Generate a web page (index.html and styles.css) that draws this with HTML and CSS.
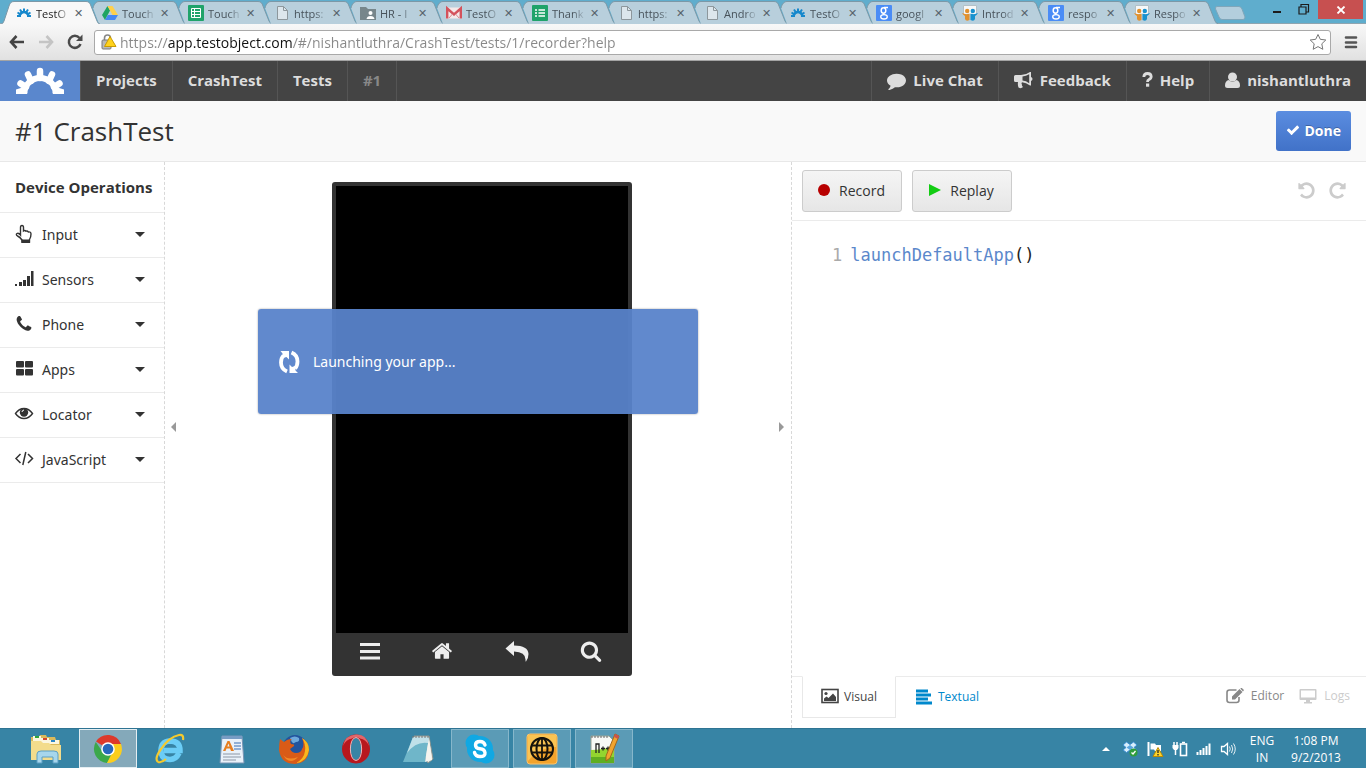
FILE: index.html
```html
<!DOCTYPE html>
<html lang="en">
<head>
    <meta charset="UTF-8">
    <meta name="viewport" content="width=device-width, initial-scale=1.0">
    <title>TestObject - CrashTest</title>
    <link rel="stylesheet" href="styles.css">
</head>
<body>
    <!-- shared icons -->
    <svg class="defs" aria-hidden="true">
        <symbol id="tab-shape" viewBox="0 0 100 24">
            <path class="tab-fill" d="M13 24L7 8C8 4 10 1.500 13 1.500H86C89 1.500 90 3 91 6L97 21Q98 24 100 24Z"/>
            <path class="tab-line" d="M7 8C8 4 10 1.500 13 1.500H86C89 1.500 90 3 91 6L97 21Q98 23.500 100 23.500"/>
        </symbol>
        <symbol id="tab-first" viewBox="0 0 100 24">
            <path class="tab-fill" d="M1 24Q3 24 4 21L9 6C10 3 11 1.500 14 1.500H86C89 1.500 90 3 91 6L97 21Q98 24 100 24Z"/>
            <path class="tab-line" d="M1 24Q3 24 4 21L9 6C10 3 11 1.500 14 1.500H86C89 1.500 90 3 91 6L97 21Q98 24 100 24"/>
        </symbol>
        <symbol id="fav-gear" viewBox="0 0 16 16">
            <path d="M3.500 10.500Q5 7 8 7T12.500 10.500" fill="none" stroke="#1688cc" stroke-width="2.500"/>
            <path d="M1 11H5M11 11H15M1.500 7.500L4 9M4 4.500L6 7.500M8 3.500V7M12 4.500L10 7.500M14.500 7.500L12 9" fill="none" stroke="#1688cc" stroke-width="2"/>
        </symbol>
        <symbol id="fav-drive" viewBox="0 0 16 16">
            <path d="M5.500 1L0 10L3 15L8 5.500Z" fill="#1fa463"/>
            <path d="M5.500 1H10.500L16 10H10.500Z" fill="#ffd04b"/>
            <path d="M3 15L5.800 10H16L13 15Z" fill="#4688f1"/>
        </symbol>
        <symbol id="fav-sheet" viewBox="0 0 16 16">
            <rect width="16" height="16" rx="1" fill="#1fa36a"/>
            <path d="M3.500 3.500H12.500V12.500H3.500ZM3.500 6.500H12.500M3.500 9.500H12.500M6.500 3.500V12.500" fill="none" stroke="#fff"/>
        </symbol>
        <symbol id="fav-form" viewBox="0 0 16 16">
            <rect width="16" height="16" rx="1" fill="#1fa36a"/>
            <path d="M3 5H5M3 8H5M3 11H5M6.500 5H13M6.500 8H13M6.500 11H13" stroke="#fff" stroke-width="1.500"/>
        </symbol>
        <symbol id="fav-page" viewBox="0 0 16 16">
            <path d="M3.500 1.500H9.500L13.500 5.500V14.500H3.500Z" fill="#dce6ec" stroke="#8d979c"/>
            <path d="M9.500 1.500V5.500H13.500" fill="none" stroke="#8d979c"/>
        </symbol>
        <symbol id="fav-folder" viewBox="0 0 16 16">
            <path d="M0 2H6L8 4H16V15H0Z" fill="#77868b"/>
            <circle cx="10.500" cy="8" r="2" fill="#fff"/>
            <path d="M6.500 14Q7 11 10.500 11T14.500 14Z" fill="#fff"/>
        </symbol>
        <symbol id="fav-mail" viewBox="0 0 16 16">
            <rect y="2.500" width="16" height="11" fill="#f4e9e9"/>
            <path d="M1.200 13.500V3.500L8 9.500L14.800 3.500V13.500" fill="none" stroke="#d4525c" stroke-width="2.400"/>
            <path d="M3 13L6.500 9M13 13L9.500 9" stroke="#d98a90"/>
        </symbol>
        <symbol id="fav-google" viewBox="0 0 16 16">
            <rect width="16" height="16" rx="1" fill="#4a8cf6"/>
            <ellipse cx="7.500" cy="5.500" rx="2.300" ry="2.700" fill="none" stroke="#fff" stroke-width="1.500"/>
            <ellipse cx="8" cy="11.800" rx="3.300" ry="2.200" fill="none" stroke="#fff" stroke-width="1.300"/>
            <path d="M8 2.500H12M8 8L7 9.500" stroke="#fff" stroke-width="1.300"/>
        </symbol>
        <symbol id="fav-slide" viewBox="0 0 16 16">
            <path d="M1.500 9V.5H14.500V9" fill="#f6f8f9" stroke="#b3c0c6"/>
            <circle cx="5.200" cy="6" r="2.200" fill="#e2912e"/>
            <circle cx="10.800" cy="6" r="2.200" fill="#1792cf"/>
            <path d="M0 8Q4 10 7.500 8.500V15Q4 17 3 14V11Q1 10 0 8Z" fill="#e2912e"/>
            <path d="M16 8Q12 10 8.500 8.500V15Q12 17 13 14V11Q15 10 16 8Z" fill="#1792cf"/>
        </symbol>
        <symbol id="repeat" viewBox="0 0 1792 1792">
            <path d="M1664 256v448q0 26-19 45t-45 19h-448q-42 0-59-40-17-39 14-69l138-138q-148-137-349-137-104 0-198.500 40.500t-163.500 109.500-109.500 163.500-40.500 198.500 40.500 198.500 109.500 163.500 163.500 109.500 198.500 40.500q119 0 225-52t179-147q7-10 23-12 15 0 25 9l137 138q9 8 9.500 20.500t-7.500 22.500q-109 132-264 204.500t-327 72.500q-156 0-298-61t-245-164-164-245-61-298 61-298 164-245 245-164 298-61q147 0 284.500 55.500t244.500 156.500l130-129q29-31 70-14 39 17 39 59z"/>
        </symbol>
    </svg>

    <header class="browser">
        <div class="tab-strip">
            <div class="tabs">
                <div class="tab active"><svg class="tab-bg"><use href="#tab-first"/></svg><svg class="fav"><use href="#fav-gear"/></svg><span>TestO</span><button aria-label="Close tab">✕</button></div>
                <div class="tab"><svg class="tab-bg"><use href="#tab-shape"/></svg><svg class="fav"><use href="#fav-drive"/></svg><span>Touch</span><button aria-label="Close tab">✕</button></div>
                <div class="tab"><svg class="tab-bg"><use href="#tab-shape"/></svg><svg class="fav"><use href="#fav-sheet"/></svg><span>Touch</span><button aria-label="Close tab">✕</button></div>
                <div class="tab"><svg class="tab-bg"><use href="#tab-shape"/></svg><svg class="fav"><use href="#fav-page"/></svg><span>https:</span><button aria-label="Close tab">✕</button></div>
                <div class="tab"><svg class="tab-bg"><use href="#tab-shape"/></svg><svg class="fav"><use href="#fav-folder"/></svg><span>HR - I</span><button aria-label="Close tab">✕</button></div>
                <div class="tab"><svg class="tab-bg"><use href="#tab-shape"/></svg><svg class="fav"><use href="#fav-mail"/></svg><span>TestO</span><button aria-label="Close tab">✕</button></div>
                <div class="tab"><svg class="tab-bg"><use href="#tab-shape"/></svg><svg class="fav"><use href="#fav-form"/></svg><span>Thank</span><button aria-label="Close tab">✕</button></div>
                <div class="tab"><svg class="tab-bg"><use href="#tab-shape"/></svg><svg class="fav"><use href="#fav-page"/></svg><span>https:</span><button aria-label="Close tab">✕</button></div>
                <div class="tab"><svg class="tab-bg"><use href="#tab-shape"/></svg><svg class="fav"><use href="#fav-page"/></svg><span>Andro</span><button aria-label="Close tab">✕</button></div>
                <div class="tab"><svg class="tab-bg"><use href="#tab-shape"/></svg><svg class="fav"><use href="#fav-gear"/></svg><span>TestO</span><button aria-label="Close tab">✕</button></div>
                <div class="tab"><svg class="tab-bg"><use href="#tab-shape"/></svg><svg class="fav"><use href="#fav-google"/></svg><span>googl</span><button aria-label="Close tab">✕</button></div>
                <div class="tab"><svg class="tab-bg"><use href="#tab-shape"/></svg><svg class="fav"><use href="#fav-slide"/></svg><span>Introd</span><button aria-label="Close tab">✕</button></div>
                <div class="tab"><svg class="tab-bg"><use href="#tab-shape"/></svg><svg class="fav"><use href="#fav-google"/></svg><span>respo</span><button aria-label="Close tab">✕</button></div>
                <div class="tab"><svg class="tab-bg"><use href="#tab-shape"/></svg><svg class="fav"><use href="#fav-slide"/></svg><span>Respo</span><button aria-label="Close tab">✕</button></div>
            </div>
            <button class="new-tab" aria-label="New tab">
                <svg width="32" height="16" viewBox="0 0 32 16"><path d="M3 1.500H25Q27 1.500 28 4L31 12Q31 14.500 29 14.500H8Q6 14.500 5 12L1.500 4Q1 1.500 3 1.500Z" fill="#b3cedd" stroke="#7fa6ba"/></svg>
            </button>
            <div class="window-buttons">
                <button aria-label="Minimize"><svg width="10" height="12" viewBox="0 0 10 12"><path d="M1 9H9" stroke="#1c1c1c" stroke-width="2"/></svg></button>
                <button aria-label="Restore"><svg width="12" height="12" viewBox="0 0 12 12"><path d="M1 4H8V11H1ZM3 3.500V1.500H10.500V9H8.500" fill="none" stroke="#1c1c1c" stroke-width="1.200"/></svg></button>
                <button class="close" aria-label="Close"><svg width="10" height="8" viewBox="0 0 10 8"><path d="M1.500 .5L8.500 7.500M8.500 .5L1.500 7.500" stroke="#fff" stroke-width="1.800"/></svg></button>
            </div>
        </div>
        <div class="toolbar">
            <button aria-label="Back"><svg width="16" height="14" viewBox="0 0 16 14"><path d="M7.500 1L2 7L7.500 13M2 7H15" fill="none" stroke="#444" stroke-width="2.600"/></svg></button>
            <button aria-label="Forward"><svg width="16" height="14" viewBox="0 0 16 14"><path d="M8.500 1L14 7L8.500 13M14 7H1" fill="none" stroke="#c4c4c4" stroke-width="2.600"/></svg></button>
            <button aria-label="Reload"><svg width="16" height="16" viewBox="0 0 16 16"><path d="M12.500 4A6 6 0 1 0 13.500 10" fill="none" stroke="#4a4a4a" stroke-width="2.500"/><path d="M15.500 .5V7H9Z" fill="#4a4a4a"/></svg></button>
            <div class="omnibox">
                <svg width="16" height="16" viewBox="0 0 16 16">
                    <path d="M3.500 7V4Q3.500 1 6.500 1T9.500 4" fill="none" stroke="#888" stroke-width="1.600"/>
                    <rect x="1" y="6" width="9" height="9" rx="1" fill="#b9b9b9" stroke="#7b7b7b"/>
                    <path d="M9 2.500L15 12.500H3.500Z" fill="#ffd21c" stroke="#c99b00" stroke-linejoin="round"/>
                </svg>
                <input class="url" type="text" aria-label="Address" value="https://app.testobject.com/#/nishantluthra/CrashTest/tests/1/recorder?help">
                <button aria-label="Bookmark"><svg width="18" height="18" viewBox="0 0 18 18"><path d="M9 1.500L11.300 6.300L16.800 7L12.800 10.800L13.800 16.300L9 13.600L4.200 16.300L5.200 10.800L1.200 7L6.700 6.300Z" fill="#fff" stroke="#777" stroke-linejoin="round"/></svg></button>
            </div>
            <button aria-label="Menu"><svg width="14" height="14" viewBox="0 0 14 14"><path d="M2 2.500H12M2 7.500H12M2 12H12" stroke="#555" stroke-width="2.600" stroke-linecap="round"/></svg></button>
        </div>
    </header>

    <nav class="navbar">
        <a class="logo" href="#" aria-label="TestObject">
            <svg width="50" height="28" viewBox="0 0 50 28">
                <path d="M9.500 26A15.500 15 0 0 1 40.500 26" fill="none" stroke="#fff" stroke-width="6"/>
                <path d="M25 11V4M16 14L13 7.500M34 14L37 7.500M11 20L5.500 16.500M39 20L44.500 16.500" stroke="#fff" stroke-width="6.500" stroke-linecap="round"/>
                <path d="M1 27V22.500L9 20L12.500 27ZM49 27V22.500L41 20L37.500 27Z" fill="#fff"/>
            </svg>
        </a>
        <a href="#">Projects</a>
        <a href="#">CrashTest</a>
        <a href="#">Tests</a>
        <a class="current" href="#">#1</a>
        <div class="nav-right">
            <a href="#"><svg width="19" height="19" viewBox="0 0 1792 1792"><path d="M1792 896q0 174-120 321.500t-326 233-450 85.500q-70 0-145-8-198 175-460 242-49 14-114 22-17 2-30.500-9t-17.500-29v-1q-3-4-.5-12t2-10 4.500-9.500l6-9 7-8.500 8-9q7-8 31-34.500t34.500-38 31-39.500 32.500-51 27-59 26-76q-157-89-247.500-220t-90.500-281q0-130 71-248.500t191-204.500 286-136.500 348-50.500q244 0 450 85.500t326 233 120 321.500z"/></svg>Live Chat</a>
            <a href="#"><svg width="19" height="17" viewBox="0 0 19 17"><path d="M0 4.500Q0 3 1.500 3H7Q12 3 16 0H17V5Q18.500 5.500 18.500 7T17 9V13.500H16Q12 10.500 8 10.200Q7 11.500 8 12.500Q7.500 13.500 9 15Q7 17 4.500 15.500Q3.500 13 4 10H1.500Q0 10 0 8.500ZM8.500 4.500V8.600Q12 9 15.200 11.200V2.200Q12 4.200 8.500 4.500Z" fill-rule="evenodd"/></svg>Feedback</a>
            <a href="#"><svg width="11" height="16" viewBox="0 0 11 16"><path d="M1.800 5Q2 1.500 5.500 1.500T9.200 4.500Q9.200 6.500 7 7.500Q5.500 8.200 5.500 10" fill="none" stroke="#ddd" stroke-width="2.800"/><rect x="4" y="11.500" width="3.200" height="3.200"/></svg>Help</a>
            <a href="#"><svg width="15" height="17" viewBox="0 0 15 17"><circle cx="7.500" cy="5" r="4.500"/><path d="M3.500 8Q7.500 11.500 11.500 8Q15 9 15 13.500Q15 16 12.500 16H2.500Q0 16 0 13.500Q0 9 3.500 8Z"/></svg>nishantluthra</a>
        </div>
    </nav>

    <div class="page-title">
        <h1>#1 CrashTest</h1>
        <button class="done"><svg width="14" height="14" viewBox="0 0 1792 1792"><path d="M1671 566q0 40-28 68l-724 724-136 136q-28 28-68 28t-68-28l-136-136-362-362q-28-28-28-68t28-68l136-136q28-28 68-28t68 28l294 295 656-657q28-28 68-28t68 28l136 136q28 28 28 68z"/></svg>Done</button>
    </div>

    <main class="workspace">
        <aside class="sidebar">
            <h2>Device Operations</h2>
            <button><svg viewBox="0 0 20 20"><path d="M6.500 11V3.500Q6.500 1.500 8 1.500T9.500 3.500V7Q11 6 12 7.200Q13.500 6.700 14.300 8Q17 7.500 17 10Q17 13 15.500 15.500V18H8V16Q6 13 3.500 12Q1.500 10.500 3 9.500T6.500 11Z" fill="none" stroke="#333" stroke-width="1.400"/><path d="M7.500 15.500H16V19H7.500Z"/></svg>Input<i class="caret"></i></button>
            <button><svg viewBox="0 0 20 20"><path d="M1 15H3V17H1ZM5 13H8V17H5ZM9 11H12V17H9ZM13 7H16V17H13ZM17 2H19.500V17H17Z"/></svg>Sensors<i class="caret"></i></button>
            <button><svg viewBox="-60 -60 1912 1912"><path d="M1600 1240q0 27-10 70.500t-21 68.500q-21 50-122 106-94 51-186 51-27 0-53-3.500t-57.500-12.500-47-14.500-55.500-20.500-49-18q-98-35-175-83-127-79-264-216t-216-264q-48-77-83-175-3-9-18-49t-20.500-55.500-14.500-47-12.500-57.500-3.500-53q0-92 51-186 56-101 106-122 25-11 68.500-21t70.500-10q14 0 21 3 18 6 53 76 11 19 30 54t35 63.500 31 53.500q3 4 17.500 25t21.500 35.500 7 28.500q0 20-28.500 50t-62 55-62 53-28.500 46q0 9 5 22.500t8.500 20.500 14 24 11.500 19q76 137 174 235t235 174q2 1 19 11.500t24 14 20.500 8.500 22.500 5q18 0 46-28.500t53-62 55-62 50-28.500q14 0 28.500 7t35.500 21.500 25 17.500q25 15 53.500 31t63.500 35 54 30q70 35 76 53 3 7 3 21z"/></svg>Phone<i class="caret"></i></button>
            <button><svg viewBox="0 0 20 20"><rect x="2" y="2" width="8" height="6.500" rx="1"/><rect x="11" y="2" width="8" height="6.500" rx="1"/><rect x="2" y="10" width="8" height="6.500" rx="1"/><rect x="11" y="10" width="8" height="6.500" rx="1"/></svg>Apps<i class="caret"></i></button>
            <button><svg viewBox="0 0 20 20"><path d="M1.500 9.500Q5 4.500 10 4.500T18.500 9.500Q15 14.500 10 14.500T1.500 9.500Z" fill="none" stroke="#333" stroke-width="1.400"/><circle cx="10" cy="8.500" r="4.200"/><path d="M8 8Q8 6.300 10 6" fill="none" stroke="#fff"/></svg>Locator<i class="caret"></i></button>
            <button><svg viewBox="0 0 20 20"><path d="M6.500 5L2 9.500L6.500 14M14 5L18.500 9.500L14 14M11.800 3L8.800 16" fill="none" stroke="#333" stroke-width="1.500"/></svg>JavaScript<i class="caret"></i></button>
        </aside>

        <section class="stage">
            <button class="handle" aria-label="Collapse left"><i class="arrow-left"></i></button>
            <div class="phone">
                <div class="screen"></div>
                <div class="phone-keys">
                    <button aria-label="Menu"><svg width="20" height="20" viewBox="0 0 20 20"><path d="M0 4.500H20M0 11.500H20M0 18H20" stroke="#eee" stroke-width="3"/></svg></button>
                    <button aria-label="Home"><svg width="22" height="22" viewBox="0 0 1792 1792"><path d="M1472 992v480q0 26-19 45t-45 19h-384v-384h-256v384h-384q-26 0-45-19t-19-45v-480q0-1 .5-3t.5-3l575-474 575 474q1 2 1 6zm223-69l-62 74q-8 9-21 11h-3q-13 0-21-7l-692-577-692 577q-12 8-24 7-13-2-21-11l-62-74q-8-10-7-23.500t11-21.500l719-599q32-26 76-26t76 26l244 204v-195q0-14 9-23t23-9h192q14 0 23 9t9 23v408l219 182q10 8 11 21.500t-7 23.500z"/></svg></button>
                    <button aria-label="Back"><svg width="24" height="22" viewBox="0 0 24 22"><path d="M9 1V5.500Q23 5.500 23.500 14Q23.500 18 21 21.500Q20.500 21.500 20.500 21Q21.500 12 9 11.500V16L.5 8.500Z"/></svg></button>
                    <button aria-label="Search"><svg width="22" height="22" viewBox="0 0 1792 1792"><path d="M1216 832q0-185-131.500-316.500t-316.500-131.500-316.500 131.500-131.500 316.500 131.500 316.500 316.500 131.500 316.500-131.500 131.500-316.500zm512 832q0 52-38 90t-90 38q-54 0-90-38l-343-342q-179 124-399 124-143 0-273.500-55.500t-225-150-150-225-55.500-273.500 55.500-273.500 150-225 225-150 273.500-55.500 273.500 55.500 225 150 150 225 55.500 273.500q0 220-124 399l343 343q37 37 37 90z"/></svg></button>
                </div>
            </div>
            <button class="handle right" aria-label="Collapse right"><i class="arrow-right"></i></button>
            <div class="message" role="status">
                <svg width="24" height="24" viewBox="0 0 24 24">
                    <path d="M10 21.500Q4 19 4 12.500Q4 8 6.500 5.500M14.500 2.500Q20.500 5 20.500 11.500Q20.500 16 18 18.500" fill="none" stroke="#fff" stroke-width="3.800"/>
                    <path d="M3.500 1H12V9.500L9.500 7L6 8L5.500 3.500ZM21 23H12.500V14.500L15 17L18 16L18.500 20.500Z"/>
                </svg>
                <span>Launching your app...</span>
            </div>
        </section>

        <section class="editor">
            <div class="editor-bar">
                <button class="btn"><svg width="12" height="12" viewBox="0 0 12 12"><circle cx="6" cy="6" r="6" fill="#b80000"/></svg>Record</button>
                <button class="btn"><svg width="12" height="12" viewBox="0 0 12 12"><path d="M0 0L12 6L0 12Z" fill="#13cc13"/></svg>Replay</button>
                <div class="history">
                    <button aria-label="Undo"><svg class="flip" width="19" height="19"><use href="#repeat"/></svg></button>
                    <button aria-label="Redo"><svg width="19" height="19"><use href="#repeat"/></svg></button>
                </div>
            </div>
            <pre class="code"><span class="line-no">1</span><code><span class="fn">launchDefaultApp</span>()</code></pre>
            <div class="editor-tabs">
                <button class="view-tab selected"><svg width="18" height="16" viewBox="0 0 18 16"><rect x="1" y="1.500" width="16" height="13" fill="none" stroke="#444" stroke-width="1.600"/><circle cx="5" cy="5.500" r="1.600"/><path d="M3 13V10.500L5.500 8.500L7.500 10L12 5.500L15 9V13Z"/></svg>Visual</button>
                <button class="view-tab"><svg width="16" height="16" viewBox="0 0 16 16"><path d="M0 2H12M0 6H15M0 10H12M0 14H16" stroke="#0088cc" stroke-width="3"/></svg>Textual</button>
                <div class="tools">
                    <button><svg width="18" height="16" viewBox="0 0 18 16"><path d="M13 9V12Q13 14.500 10.500 14.500H3.500Q1 14.500 1 12V4.500Q1 2 3.500 2H10.500" fill="none" stroke="#888" stroke-width="1.600"/><path d="M6 11.500V8.500L13.500 1L16.500 4L9 11.500ZM14.300 .5L15.500 -.3L18 2L17 3.500Z"/></svg>Editor</button>
                    <button disabled><svg width="18" height="16" viewBox="0 0 18 16"><path d="M1.500 1H16.500Q17.500 1 17.500 2V11Q17.500 12 16.500 12H11V14H13V15.500H5V14H7V12H1.500Q.5 12 .5 11V2Q.5 1 1.500 1ZM2 2.500V9.500H16V2.500Z" fill-rule="evenodd"/></svg>Logs</button>
                </div>
            </div>
        </section>
    </main>

    <footer class="taskbar">
        <button aria-label="File Explorer"><svg width="34" height="34" viewBox="0 0 34 34">
            <path d="M2 5H10L11 3H17L18 5H26L27 8H31V28H2Z" fill="#d9b95b"/><path d="M4 4H12V9H4ZM12 6H20V11H12ZM20 8H30V12H20Z" fill="#fbf6df"/><path d="M6 4H10V6H6Z" fill="#2fa53a"/><path d="M14 6H18V8H14Z" fill="#d4452e"/><path d="M22 8H26V10H22Z" fill="#2a86c9"/><path d="M2 9H12L14 11H20L22 13H32V28H2Z" fill="#f3dc8c"/>
            <path d="M8 31V22Q8 19 12 19H25Q29 19 29 22V31H24V25H13V31Z" fill="#a7d6ec" stroke="#5a9fc4"/></svg></button>
        <button class="focused" aria-label="Chrome"><svg width="32" height="32" viewBox="0 0 32 32">
            <path d="M16 16L4 8.500A14 14 0 0 1 29 11H16Z" fill="#dd3a2c"/><path d="M16 16L22 19L15 30A14 14 0 0 1 3.800 9L10 18Z" fill="#3ba84a"/><path d="M16 11H29A14 14 0 0 1 15 30L21 18Z" fill="#fbce1d"/><circle cx="16" cy="16" r="6.800" fill="#fff"/><circle cx="16" cy="16" r="5.300" fill="#2769bd"/></svg></button>
        <button aria-label="Internet Explorer"><svg width="32" height="32" viewBox="0 0 32 32">
            <path d="M25 20Q22 26.500 16 26.500Q7 26.500 7 17.500T16 8Q26 8 26 17.500H10" fill="none" stroke="#6bcdf6" stroke-width="5.500"/><path d="M4 29Q0 26 7 16Q15 4 25 2Q30 1 29 7" fill="none" stroke="#f4ca2e" stroke-width="2.200"/><path d="M4 29Q8 30 12 26" fill="none" stroke="#f4ca2e" stroke-width="2"/></svg></button>
        <button aria-label="WordPad"><svg width="32" height="32" viewBox="0 0 32 32">
            <path d="M6 3H26L28 30H4Z" fill="#e9f1f9" stroke="#7995b4"/><path d="M6 3H26V6H6Z" fill="#779cc4"/><path d="M7 18L11.500 8H13.500L18 18H15L14 15.500H10.500L9.500 18ZM11.300 13.500H13.500L12.500 10.500Z" fill="#e77f21" fill-rule="evenodd"/><path d="M18 10H25M18 13H25M18 16H25" stroke="#3a6eb3"/><path d="M7 21H24M7 24H25M7 27H20" stroke="#8d97a5"/></svg></button>
        <button aria-label="Firefox"><svg width="32" height="32" viewBox="0 0 32 32">
            <circle cx="17" cy="14" r="12" fill="#22549d"/><path d="M12 5Q17 2 21 5Q22 9 18 9Q14 12 13 7Z" fill="#6da9dc"/><path d="M2 6L6 9Q9 6 14 6Q11 8 13 11Q17 11 16 13L12 16Q14 20 18 20Q23 20 24 16Q27 12 24 5Q31 9 31 17Q30 30 17 31Q3 31 1 17Q1 11 2 6Z" fill="#d95b17"/><path d="M24 5Q31 9 31 17Q29 29 18 30Q26 26 27 18Q28 11 24 5Z" fill="#f8b71e"/><path d="M5 22Q10 28 20 24Q14 31 8 26Z" fill="#f28a26"/></svg></button>
        <button aria-label="Opera"><svg width="32" height="32" viewBox="0 0 32 32">
            <path d="M16 1.500A14 14.500 0 0 1 16 30.500A14 14.500 0 0 1 16 1.500ZM16 5C9 5 9 27 16 27C23 27 23 5 16 5Z" fill="#b8171e" fill-rule="evenodd"/><path d="M3 13Q5 2 16 1.500T29 13Q26 6 20 5.500Q18 4 16 4T12 5.500Q6 6 3 13Z" fill="#e2666a"/><path d="M16 4.500C8.500 4.500 8.500 27.500 16 27.500C23.500 27.500 23.500 4.500 16 4.500Z" fill="none" stroke="#eab9bb"/></svg></button>
        <button aria-label="Notepad"><svg width="32" height="32" viewBox="0 0 32 32">
            <path d="M12 3H27L31 26L26 30Z" fill="#e3e4dd" stroke="#8b948f"/><path d="M11 4H27L23 29H1Z" fill="#6fb6c9"/><path d="M11 4H27L26 10Q14 8 5 20Z" fill="#c1e1e9"/><path d="M27 5L30 27L23 29Z" fill="#f5f5ef"/><path d="M11 3V5M14 3V5M17 3V5M20 3V5M23 3V5M26 3V5" stroke="#777"/></svg></button>
        <button class="open" aria-label="Skype"><svg width="32" height="32" viewBox="0 0 32 32">
            <circle cx="10" cy="10" r="8.500" fill="#11a8e3"/><circle cx="22" cy="22" r="8.500" fill="#11a8e3"/><circle cx="16" cy="16" r="13" fill="#11a8e3"/><path d="M21 12Q20 8.500 16 8.500Q11.500 8.500 11.500 12T16 15.700T21 19.700T16 23.500Q11.500 23.500 10.500 19.500" fill="none" stroke="#fff" stroke-width="3.400" stroke-linecap="round"/></svg></button>
        <button class="open" aria-label="Web Tool"><svg width="32" height="32" viewBox="0 0 32 32">
            <rect x="1" y="1" width="30" height="30" rx="3" fill="#f3a32c" stroke="#f8c36c"/><path d="M2 2H30V14Q14 14 2 28Z" fill="#fac453"/><circle cx="16" cy="16" r="11" fill="none" stroke="#16130c" stroke-width="2"/><ellipse cx="16" cy="16" rx="5.500" ry="11" fill="none" stroke="#16130c" stroke-width="2"/><path d="M16 5V27M5.500 12.500H26.500M5.500 19.500H26.500" stroke="#16130c" stroke-width="1.800"/></svg></button>
        <button class="open" aria-label="Notepad++"><svg width="32" height="32" viewBox="0 0 32 32">
            <path d="M3 3H21L26 8V30H3Z" fill="#f8f9f6" stroke="#98a294"/><path d="M3 17Q15 17 26 13V30H3Z" fill="#93d52f"/><path d="M3 24H26V30H3Z" fill="#5fae21"/><path d="M4 3V5M7 3V5M10 3V5M13 3V5M16 3V5M19 3V5" stroke="#666"/><path d="M8 20V11H11V20M13 15.500H17M15 13.500V17.500M18 15.500H22M20 13.500V17.500" fill="none" stroke="#222" stroke-width="1.300"/><path d="M27 1L31 3L22 25L18 28V23Z" fill="#f1a42e" stroke="#a2671b"/><path d="M27 1L31 3L30 6L26 4Z" fill="#cc524f"/></svg></button>

        <div class="tray">
            <svg width="16" height="16" viewBox="0 0 16 16"><path d="M4 10L8 6L12 10Z" fill="#fff"/></svg>
            <svg width="16" height="16" viewBox="0 0 16 16"><path d="M4.500 1L8 3.500L11.500 1L15 4L12 6.500L15 9L11.500 11.500L8 9L4.500 11.500L1 9L4 6.500L1 4Z" fill="#d9effc" stroke="#3b8dd0"/><path d="M8 4L11.500 6.500L8 9L4.500 6.500Z" fill="#5aa6df"/><circle cx="11.500" cy="11.500" r="4" fill="#2f9e3c"/><path d="M9.500 11.500L11 13L13.500 10" fill="none" stroke="#fff" stroke-width="1.300"/></svg>
            <svg width="18" height="16" viewBox="0 0 18 16"><path d="M2.500 1V15" stroke="#fff" stroke-width="2"/><path d="M4.500 2.500H9L10 4H15V10H9L8 8.500H4.500Z" fill="#fff"/><path d="M12 6.500L17 15.500H7Z" fill="#ffd42a" stroke="#b88a05"/><path d="M12 9V12M12 13V14.500" stroke="#222" stroke-width="1.300"/></svg>
            <svg width="16" height="16" viewBox="0 0 16 16"><path d="M2 1V4M5 1V4" stroke="#fff" stroke-width="1.500"/><path d="M.5 4H6.500V7L5 9H2L.5 7Z" fill="#fff"/><path d="M3.500 9V14" stroke="#fff" stroke-width="1.500"/><rect x="8.500" y="3" width="6" height="11.500" fill="none" stroke="#fff" stroke-width="1.600"/><path d="M10 1.500H13" stroke="#fff" stroke-width="1.500"/></svg>
            <svg width="16" height="16" viewBox="0 0 16 16"><path d="M1.500 11V14M4.500 9V14M7.500 7V14M10.500 5V14M13.500 2.500V14" stroke="#fff" stroke-width="2"/></svg>
            <svg width="16" height="16" viewBox="0 0 16 16"><path d="M1.500 5.500H4L7.500 2.500V13.500L4 10.500H1.500Z" fill="none" stroke="#fff" stroke-width="1.300"/><path d="M9.500 5.500Q11 8 9.500 10.500M11.500 4Q14 8 11.500 12M13.500 2.500Q17 8 13.500 13.500" fill="none" stroke="#e6f1f5"/></svg>
            <div class="lang">ENG<br>IN</div>
            <div class="clock">1:08 PM<br>9/2/2013</div>
        </div>
    </footer>
</body>
</html>
```
FILE: styles.css
```css
* {
    box-sizing: border-box;
}

body {
    display: flex;
    flex-direction: column;
    min-height: 100vh;
    margin: 0;
    font-family: "Open Sans", "Noto Sans", sans-serif;
    font-size: 14px;
    color: #333;
    background: #fff;
}

button {
    margin: 0;
    padding: 0;
    border: none;
    background: none;
    font: inherit;
    color: inherit;
    cursor: pointer;
}

svg {
    flex: none;
    fill: currentColor;
}

.defs {
    position: absolute;
    width: 0;
    height: 0;
}

/* browser window */
.tab-strip {
    display: flex;
    height: 24px;
    background: #5fadcd;
    border-bottom: 1px solid #8fa5b0;
}

.tabs {
    display: flex;
}

.tab {
    position: relative;
    display: flex;
    align-items: center;
    width: 86px;
    height: 24px;
    padding: 2px 0 0 16px;
    font-size: 11px;
    color: #47525a;
}

.tab-bg {
    position: absolute;
    top: 0;
    left: 0;
    width: 100px;
    height: 24px;
}

.tab-fill {
    fill: var(--tab, #b8cfdc);
}

.tab-line {
    fill: none;
    stroke: #7c98a7;
}

.tab.active {
    color: #222;
}

.tab.active .tab-bg {
    --tab: #f8f8f8;
    z-index: 1;
}

.fav {
    position: relative;
    z-index: 2;
    width: 16px;
    height: 16px;
}

.tab span {
    position: relative;
    z-index: 2;
    width: 34px;
    margin-left: 4px;
    white-space: nowrap;
    -webkit-mask-image: linear-gradient(to right, #000 60%, transparent);
    mask-image: linear-gradient(to right, #000 60%, transparent);
}

.tab button {
    position: relative;
    z-index: 2;
    margin-left: 4px;
    font: bold 11px "DejaVu Sans", sans-serif;
    color: #56636b;
}

.new-tab {
    display: flex;
    align-items: center;
    margin-left: 10px;
    padding-top: 2px;
}

.window-buttons {
    display: flex;
    align-items: flex-start;
    gap: 16px;
    margin-left: auto;
    padding-right: 3px;
}

.window-buttons button {
    display: flex;
    padding-top: 3px;
}

.window-buttons .close {
    justify-content: center;
    width: 45px;
    margin-left: -8px;
    padding: 6px 0 5px;
    background: #c75050;
}

.toolbar {
    display: flex;
    align-items: center;
    gap: 13px;
    height: 37px;
    padding: 0 8px 0 9px;
    background: linear-gradient(#f8f8f8, #e1e1e1);
    border-bottom: 1px solid #a4a4a4;
}

.toolbar button {
    display: flex;
}

.omnibox {
    display: flex;
    flex: 1;
    align-items: center;
    gap: 3px;
    height: 25px;
    margin-left: -2px;
    padding: 0 3px 0 6px;
    background: #fff;
    border: 1px solid #a9a9a9;
    border-radius: 3px;
}

/* host name is darker than the rest of the address */
.url {
    flex: 1;
    padding: 0;
    border: none;
    outline: none;
    font: 14px "Open Sans", "Noto Sans", sans-serif;
    color: transparent;
    background: linear-gradient(to right, #888 48px, #111 48px, #111 173px, #888 173px);
    -webkit-background-clip: text;
    background-clip: text;
}

/* app navigation */
.navbar {
    display: flex;
    height: 40px;
    background: #444;
}

.navbar a {
    display: flex;
    align-items: center;
    padding: 0 15px 2px;
    border-right: 1px solid #555;
    font-size: 15px;
    font-weight: 700;
    color: #ddd;
    text-decoration: none;
}

.navbar .logo {
    width: 81px;
    padding-bottom: 0;
    background: #5a87cd;
}

.navbar .current {
    color: #888;
}

.nav-right {
    display: flex;
    margin-left: auto;
}

.nav-right a {
    gap: 7px;
    border-right: none;
    border-left: 1px solid #555;
}

.page-title {
    display: flex;
    align-items: center;
    justify-content: space-between;
    height: 61px;
    padding: 0 15px;
    background: #f9f9f9;
    border-bottom: 1px solid #e8e8e8;
}

.page-title h1 {
    margin: 0;
    font-size: 26px;
    font-weight: 400;
}

.done {
    display: flex;
    align-items: center;
    gap: 4px;
    height: 40px;
    padding: 0 10px 2px;
    border-radius: 3px;
    background: linear-gradient(#5b8de0, #4172c8);
    font-size: 14px;
    font-weight: 700;
    color: #fff;
    text-shadow: 0 -1px 0 rgba(0, 0, 0, 0.25);
}

.workspace {
    display: flex;
    flex: 1;
}

/* device operations */
.sidebar {
    width: 165px;
    border-right: 1px dashed #d8d8d8;
    font-family: "Noto Sans", "Open Sans", sans-serif;
}

.sidebar h2 {
    margin: 0;
    padding-left: 15px;
    border-bottom: 1px solid #ebebeb;
    font-family: "Open Sans", "Noto Sans", sans-serif;
    font-size: 15px;
    font-weight: 700;
    line-height: 50px;
    white-space: nowrap;
}

.sidebar button {
    display: flex;
    align-items: center;
    width: 100%;
    height: 45px;
    padding: 0 19px 2px 14px;
    border-bottom: 1px solid #ebebeb;
}

.sidebar svg {
    width: 20px;
    height: 20px;
    margin-right: 8px;
}

.caret {
    margin-left: auto;
    border: 5px solid transparent;
    border-top-color: #333;
    border-bottom: none;
}

/* device */
.stage {
    position: relative;
    display: flex;
    flex: 1;
    align-items: flex-start;
    justify-content: space-between;
}

.handle {
    align-self: stretch;
    display: flex;
    align-items: center;
    width: 20px;
    padding: 0 0 36px 6px;
}

.handle.right {
    width: 12px;
    padding-left: 0;
}

.arrow-left,
.arrow-right {
    border: 5px solid transparent;
}

.arrow-left {
    border-right-color: #999;
    border-left: none;
}

.arrow-right {
    border-left-color: #999;
    border-right: none;
}

.phone {
    width: 300px;
    margin-top: 20px;
    border: 4px solid #333;
    border-radius: 3px;
    background: #333;
}

.screen {
    aspect-ratio: 292 / 447;
    background: #000;
}

.phone-keys {
    display: flex;
    justify-content: space-between;
    height: 39px;
    padding: 7px 26px 0 24px;
    color: #eee;
}

.phone-keys button {
    display: flex;
}

.message {
    position: absolute;
    top: 147px;
    left: 50%;
    display: flex;
    align-items: center;
    gap: 12px;
    width: 440px;
    height: 105px;
    padding-left: 19px;
    border-radius: 3px;
    background: rgba(88, 131, 202, 0.95);
    box-shadow: 0 0 2px rgba(0, 0, 0, 0.4);
    font-family: "Noto Sans", "Open Sans", sans-serif;
    color: #fff;
    transform: translateX(-50%);
}

/* editor */
.editor {
    display: flex;
    flex-direction: column;
    width: 575px;
    border-left: 1px dashed #d8d8d8;
}

.editor-bar {
    display: flex;
    gap: 10px;
    height: 59px;
    padding: 8px 19px 8px 10px;
    border-bottom: 1px solid #ebebeb;
}

.btn {
    display: flex;
    align-items: center;
    justify-content: center;
    gap: 9px;
    width: 100px;
    height: 42px;
    padding: 0 1px 2px 0;
    border: 1px solid #ccc;
    border-radius: 3px;
    background: linear-gradient(#f5f5f5, #e6e6e6);
}

.history {
    display: flex;
    gap: 12px;
    margin-left: auto;
    padding-bottom: 2px;
    color: #ccc;
}

.history button {
    display: flex;
    align-items: center;
}

.flip {
    transform: scaleX(-1);
}

.code {
    display: flex;
    flex: 1;
    gap: 8px;
    margin: 0;
    padding: 22px 40px;
    font: 17px/24px "DejaVu Sans Mono", monospace;
    color: #222;
}

.code code {
    font: inherit;
}

.line-no {
    color: #aaa;
}

.fn {
    color: #5b88cb;
}

.editor-tabs {
    display: flex;
    height: 52px;
    padding: 0 16px 10px 10px;
    border-top: 1px solid #ebebeb;
    font-size: 12px;
}

.view-tab {
    display: flex;
    align-items: center;
    gap: 6px;
    padding: 0 20px 2px;
    color: #08c;
}

.view-tab.selected {
    gap: 5px;
    margin-top: -1px;
    padding: 0 18px 2px;
    border: 1px solid #e8e8e8;
    border-top-color: #fff;
    background: #fff;
    color: #444;
}

.tools {
    display: flex;
    gap: 15px;
    margin-left: auto;
    padding-bottom: 4px;
    color: #888;
}

.tools button {
    display: flex;
    align-items: center;
    gap: 7px;
}

.tools button:disabled {
    color: #ccc;
}

/* taskbar */
.taskbar {
    display: flex;
    gap: 4px;
    height: 40px;
    padding-left: 17px;
    background: #3784a5;
    border-top: 1px solid #2f7493;
}

.taskbar button {
    display: flex;
    align-items: center;
    justify-content: center;
    width: 58px;
}

.taskbar .open {
    background: #5b9bb6;
    border: 1px solid #86b7cb;
}

.taskbar .focused {
    background: #84a9ba;
    border: 1px solid #e4eef2;
}

.tray {
    display: flex;
    align-items: center;
    gap: 8px;
    margin-left: auto;
    padding-right: 22px;
    color: #fff;
    font-size: 12px;
    line-height: 17px;
    text-align: center;
}

.lang {
    width: 36px;
}

.clock {
    width: 56px;
}
```
